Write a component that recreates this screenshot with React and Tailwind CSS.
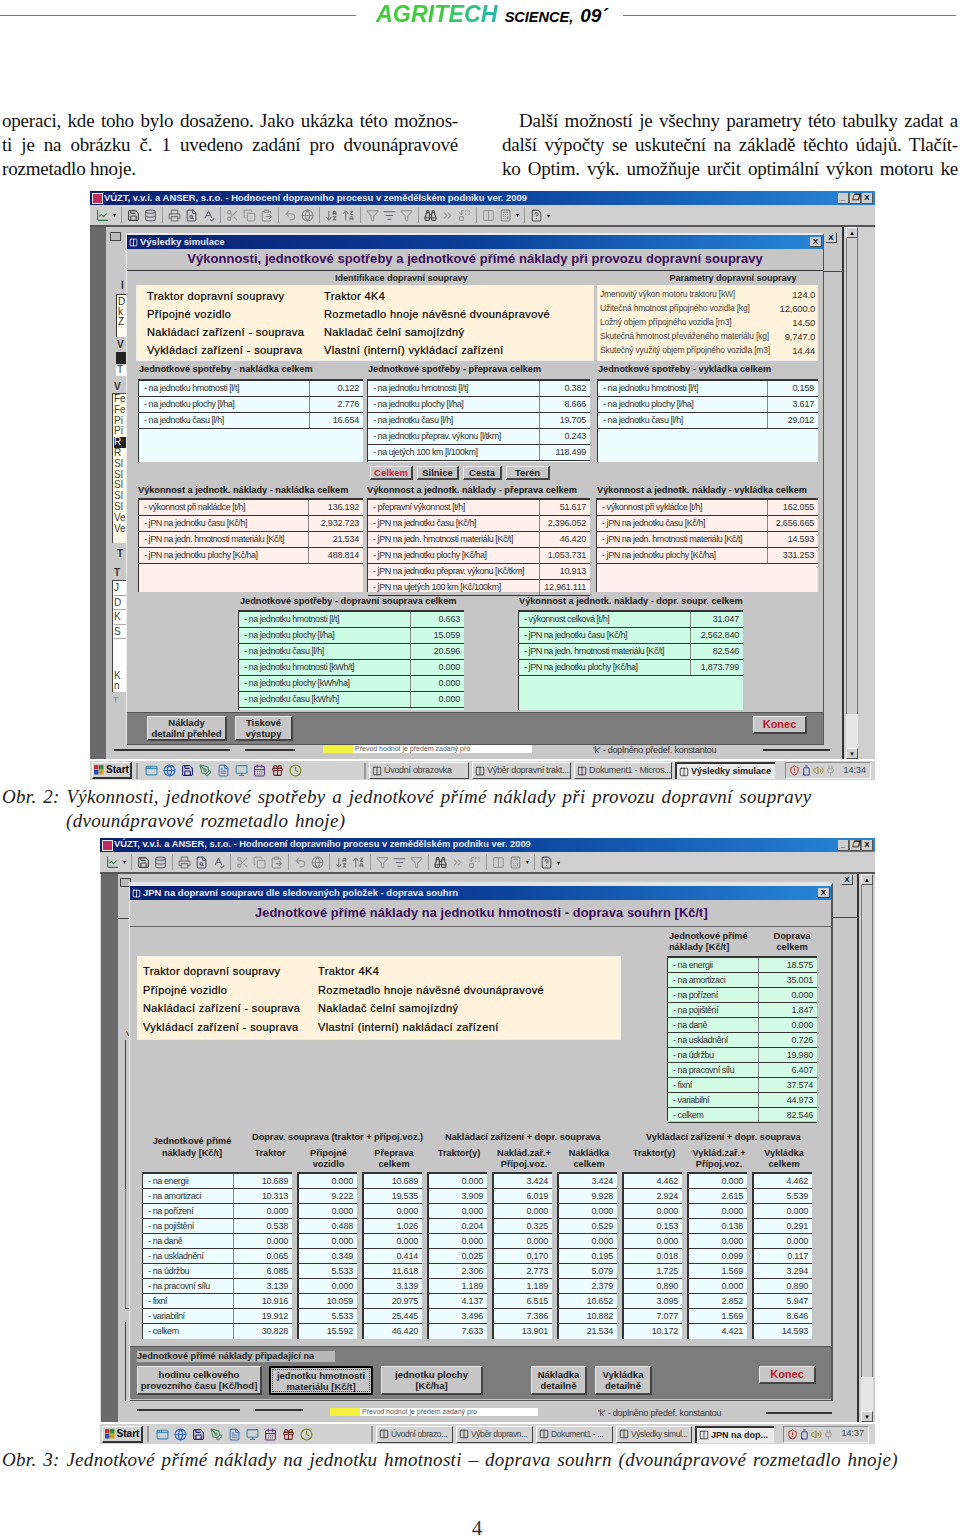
import React from "react";
import {
  Save, Database, Printer, FileSearch, SpellCheck, Scissors, Copy, ClipboardPaste, Undo2, Globe,
  ArrowDownAZ, ArrowUpZA, Filter, ListFilter, Funnel, Binoculars, ChevronsRight, Replace, Columns2,
  Calculator, FileQuestion, LineChart, Monitor, CalendarDays, Gift, Clock, PenTool, FileText,
  ShieldAlert, Battery, Volume2, Plug, AppWindow,
} from "lucide-react";

const dark = "border-[#333]";

function TitleBar({ text, size }) {
  return (
    <div className="h-[14px] flex items-center bg-gradient-to-r from-[#0a1f70] via-[#0b3f98] to-[#2a86d8] pl-[2px]">
      <div className="w-[11px] h-[11px] bg-[#c02a5c] border border-[#eee] mr-[1px] shrink-0" />
      <span className={`${size} font-bold text-[#e8eef8] whitespace-nowrap leading-none`}>{text}</span>
      <div className="ml-auto flex gap-[1px] pr-[2px]">
        <WinBtn>_</WinBtn>
        <WinBtn>
          <span className="italic">❐</span>
        </WinBtn>
        <WinBtn>X</WinBtn>
      </div>
    </div>
  );
}

function WinBtn({ children }) {
  return (
    <div className="w-[11px] h-[11px] bg-[#cfcfcf] border-r border-b border-[#555] flex items-center justify-center text-[8px] font-bold text-black leading-none">
      {children}
    </div>
  );
}

function Sep() {
  return <div className="w-[1px] h-[16px] bg-[#9a9a9a] mx-[1px] shrink-0" />;
}

function Toolbar() {
  const i = "w-[13px] h-[13px] shrink-0";
  return (
    <div className="h-[22px] bg-[#cfcfcf] border-b-2 border-[#555] flex items-center pl-[6px] gap-[4px]">
      <LineChart className={`${i} text-[#2a7a4a]`} />
      <span className="text-[6px]">▾</span>
      <Sep />
      <Save className={`${i} text-[#444]`} />
      <Database className={`${i} text-[#667]`} />
      <Sep />
      <Printer className={`${i} text-[#777]`} />
      <FileSearch className={`${i} text-[#556]`} />
      <SpellCheck className={`${i} text-[#667]`} />
      <Sep />
      <Scissors className={`${i} text-[#999]`} />
      <Copy className={`${i} text-[#999]`} />
      <ClipboardPaste className={`${i} text-[#888]`} />
      <Sep />
      <Undo2 className={`${i} text-[#999]`} />
      <Globe className={`${i} text-[#888]`} />
      <Sep />
      <ArrowDownAZ className={`${i} text-[#777]`} />
      <ArrowUpZA className={`${i} text-[#777]`} />
      <Sep />
      <Filter className={`${i} text-[#999]`} />
      <ListFilter className={`${i} text-[#667]`} />
      <Funnel className={`${i} text-[#999]`} />
      <Sep />
      <Binoculars className={`${i} text-[#444]`} />
      <ChevronsRight className={`${i} text-[#999]`} />
      <Replace className={`${i} text-[#999]`} />
      <Sep />
      <Columns2 className={`${i} text-[#999]`} />
      <Calculator className={`${i} text-[#888]`} />
      <span className="text-[6px]">▾</span>
      <Sep />
      <FileQuestion className={`${i} text-[#555]`} />
      <span className="text-[6px] self-end mb-[4px]">▾</span>
    </div>
  );
}

function Taskbar({ h, start, tasks, time, taskText, toTasksGap, trayGap }) {
  const i = "w-[13px] h-[13px] shrink-0";
  return (
    <div className={`${h} bg-[#d2d2d2] border-t-2 border-white flex items-center pl-[2px]`}>
      <div className={`${start} h-[17px] bg-[#d2d2d2] border-t border-l border-white border-r-2 border-b-2 border-r-[#333] border-b-[#333] flex items-center justify-center gap-[2px] shrink-0`}>
        <svg width="10" height="10" viewBox="0 0 10 10">
          <rect x="0" y="0" width="4.5" height="4.5" fill="#c83232" />
          <rect x="5" y="0" width="4.5" height="4.5" fill="#2e8b3a" />
          <rect x="0" y="5" width="4.5" height="4.5" fill="#2850b0" />
          <rect x="5" y="5" width="4.5" height="4.5" fill="#c8a020" />
        </svg>
        <span className="text-[10px] font-bold leading-none">Start</span>
      </div>
      <div className="ml-[4px] w-[2px] h-[16px] border-l border-r border-[#999] shrink-0" />
      <div className="gap-[5px] flex items-center ml-[7px]">
        <AppWindow className={`${i} text-[#3a8ab8]`} />
        <Globe className={`${i} text-[#2a6ad0]`} />
        <Save className={`${i} text-[#1a1a80]`} />
        <PenTool className={`${i} text-[#4a8a6a]`} />
        <FileText className={`${i} text-[#4a7ab8]`} />
        <Monitor className={`${i} text-[#3a8ab8]`} />
        <CalendarDays className={`${i} text-[#602a80]`} />
        <Gift className={`${i} text-[#702020]`} />
        <Clock className={`${i} text-[#7a8a10]`} />
      </div>
      <div className={`${toTasksGap} w-[2px] h-[16px] border-l border-r border-[#999] shrink-0`} />
      <div className="flex ml-[3px] gap-[3px]">
        {tasks.map((t) => (
          <div
            key={t.name}
            className={`${t.w} h-[17px] flex items-center gap-[2px] pl-[2px] whitespace-nowrap overflow-hidden leading-none ${
              t.active
                ? "bg-[#ebebeb] border-t-2 border-l-2 border-[#333] font-bold text-[#222] text-[9px]"
                : `bg-[#d2d2d2] border-t border-l border-white border-r border-b border-r-[#444] border-b-[#444] text-[#444] ${taskText}`
            }`}
          >
            <Columns2 className="w-[10px] h-[10px] text-[#333] shrink-0" />
            {t.name}
          </div>
        ))}
      </div>
      <div className={`${trayGap} w-[86px] h-[17px] border-t border-l border-[#888] border-r border-b border-r-white border-b-white flex items-center gap-[1px] pl-[3px] shrink-0`}>
        <ShieldAlert className="w-[11px] h-[11px] text-[#b02020]" />
        <Battery className="w-[11px] h-[11px] text-[#1a3aa0] rotate-[-90deg]" />
        <Volume2 className="w-[11px] h-[11px] text-[#908020]" />
        <Plug className="w-[11px] h-[11px] text-[#999]" />
        <span className="ml-auto mr-[4px] text-[9px] text-[#444]">{time}</span>
      </div>
    </div>
  );
}

function Scrollbar() {
  return (
    <div className="w-[12px] h-full flex flex-col bg-[#d8d8d8] mr-[2px] ml-[2px]">
      <div className="h-[11px] bg-[#cfcfcf] border-t border-l border-white border-r border-b border-r-[#555] border-b-[#555] flex items-center justify-center text-[6px] leading-none">▲</div>
      <div className="flex-1 bg-[#cdcdcd] border-x border-[#777]" />
      <div className="h-[34px] bg-[#e6e6e6]" />
      <div className="h-[11px] bg-[#cfcfcf] border-t border-l border-white border-r border-b border-r-[#555] border-b-[#555] flex items-center justify-center text-[6px] leading-none">▼</div>
    </div>
  );
}

function DataTable({ rows, w, lw, bg, rowH = "h-[16px]", h }) {
  return (
    <div className={`${w} ${h} ${bg} border-t-2 border-l ${dark} flex flex-col shrink-0`}>
      {rows.map(([label, value]) => (
        <div key={label} className={`${rowH} flex border-b ${dark} shrink-0`}>
          <div className={`${lw} pl-[5px] text-[9px] tracking-[-0.45px] text-[#333] leading-none flex items-center whitespace-nowrap overflow-hidden border-r border-[#888]`}>
            {label}
          </div>
          <div className="flex-1 pr-[4px] text-[9px] tracking-[-0.2px] text-[#333] leading-none flex items-center justify-end">{value}</div>
        </div>
      ))}
    </div>
  );
}

function Sub({ children, w, className = "" }) {
  return (
    <div className={`${w} text-[9.2px] font-bold text-[#181818] leading-none whitespace-nowrap shrink-0 flex items-center ${className}`}>
      {children}
    </div>
  );
}

function DlgTitle({ text }) {
  return (
    <div className="h-[14px] bg-gradient-to-r from-[#0a1f70] via-[#0b3f98] to-[#2a86d8] flex items-center pl-[2px] gap-[2px] shrink-0">
      <Columns2 className="w-[9px] h-[9px] text-white shrink-0" />
      <span className="text-[9.5px] font-bold text-[#e8eef8] leading-none">{text}</span>
      <div className="ml-auto pr-[1px] flex">
        <div className="w-[12px] h-[10px] bg-[#cfcfcf] border-r border-b border-[#444] flex items-center justify-center text-[8px] font-bold leading-none">X</div>
      </div>
    </div>
  );
}

function Btn({ w, h, children, className = "" }) {
  return (
    <div className={`${w} ${h} bg-[#c6c6c6] border-t border-l border-[#e8e8e8] border-r-2 border-b-2 border-r-[#444] border-b-[#444] flex items-center justify-center text-center text-[9.5px] font-bold leading-[11px] text-[#222] shrink-0 ${className}`}>
      <div>{children}</div>
    </div>
  );
}

function HintStrip({ w, ml }) {
  return (
    <div className={`${ml} ${w} h-[8px] bg-white flex text-[7px] text-[#555] leading-[8px] shrink-0`}>
      <span className="bg-[#f4f040] w-[30px] h-[8px] shrink-0" />
      <span className="whitespace-nowrap pl-[2px]">Převod hodnot je předem zadaný pro</span>
    </div>
  );
}

const info1 = [
  ["Traktor dopravní soupravy", "Traktor 4K4"],
  ["Přípojné vozidlo", "Rozmetadlo hnoje návěsné dvounápravové"],
  ["Nakládací zařízení - souprava", "Nakladač čelní samojízdný"],
  ["Vykládací zařízení - souprava", "Vlastní (interní) vykládací zařízení"],
];
const info2 = [info1[0], info1[1], info1[2], ["Vykládací zařízení - souprava", "Vlastní (interní) nakládací zařízení"]];

const params = [
  ["Jmenovitý výkon motoru traktoru [kW]", "124.0"],
  ["Užitečná hmotnost přípojného vozidla [kg]", "12,600.0"],
  ["Ložný objem přípojného vozidla [m3]", "14.50"],
  ["Skutečná hmotnost převáženého materiálu [kg]", "9,747.0"],
  ["Skutečný využitý objem přípojného vozidla [m3]", "14.44"],
];

const cons1 = [["- na jednotku hmotnosti [l/t]", "0.122"], ["- na jednotku plochy [l/ha]", "2.776"], ["- na jednotku času [l/h]", "16.654"]];
const cons2 = [
  ["- na jednotku hmotnosti [l/t]", "0.382"],
  ["- na jednotku plochy [l/ha]", "8.666"],
  ["- na jednotku času [l/h]", "19.705"],
  ["- na jednotku přeprav. výkonu [l/tkm]", "0.243"],
  ["- na ujetých 100 km [l/100km]", "118.499"],
];
const cons3 = [["- na jednotku hmotnosti [l/t]", "0.159"], ["- na jednotku plochy [l/ha]", "3.617"], ["- na jednotku času [l/h]", "29.012"]];
const perf1 = [
  ["- výkonnost při nakládce [t/h]", "136.192"],
  ["- jPN na jednotku času [Kč/h]", "2,932.723"],
  ["- jPN na jedn. hmotnosti materiálu [Kč/t]", "21.534"],
  ["- jPN na jednotku plochy [Kč/ha]", "488.814"],
];
const perf2 = [
  ["- přepravní výkonnost [t/h]", "51.617"],
  ["- jPN na jednotku času [Kč/h]", "2,396.052"],
  ["- jPN na jedn. hmotnosti materiálu [Kč/t]", "46.420"],
  ["- jPN na jednotku plochy [Kč/ha]", "1,053.731"],
  ["- jPN na jednotku přeprav. výkonu [Kč/tkm]", "10.913"],
  ["- jPN na ujetých 100 km [Kč/100km]", "12,961.111"],
];
const perf3 = [
  ["- výkonnost při vykládce [t/h]", "162.055"],
  ["- jPN na jednotku času [Kč/h]", "2,656.665"],
  ["- jPN na jedn. hmotnosti materiálu [Kč/t]", "14.593"],
  ["- jPN na jednotku plochy [Kč/ha]", "331.253"],
];
const green1 = [
  ["- na jednotku hmotnosti [l/t]", "0.663"],
  ["- na jednotku plochy [l/ha]", "15.059"],
  ["- na jednotku času [l/h]", "20.596"],
  ["- na jednotku hmotnosti [kWh/t]", "0.000"],
  ["- na jednotku plochy [kWh/ha]", "0.000"],
  ["- na jednotku času [kWh/h]", "0.000"],
];
const green2 = [
  ["- výkonnost celková  [t/h]", "31.047"],
  ["- jPN na jednotku času [Kč/h]", "2,562.840"],
  ["- jPN na jedn. hmotnosti materiálu [Kč/t]", "82.546"],
  ["- jPN na jednotku plochy [Kč/ha]", "1,873.799"],
];

const costLabels = ["- na energii", "- na amortizaci", "- na pořízení", "- na pojištění", "- na daně", "- na uskladnění", "- na údržbu", "- na pracovní sílu", "- fixní", "- variabilní", "- celkem"];
const costSummary = ["18.575", "35.001", "0.000", "1.847", "0.000", "0.726", "19.980", "6.407", "37.574", "44.973", "82.546"];
const costCols = [
  { head: ["Připojné", "vozidlo"], v: ["0.000", "9.222", "0.000", "0.488", "0.000", "0.349", "5.533", "0.000", "10.059", "5.533", "15.592"] },
  { head: ["Přeprava", "celkem"], v: ["10.689", "19.535", "0.000", "1.026", "0.000", "0.414", "11.618", "3.139", "20.975", "25.445", "46.420"] },
  { head: ["Traktor(y)"], v: ["0.000", "3.909", "0.000", "0.204", "0.000", "0.025", "2.306", "1.189", "4.137", "3.496", "7.633"] },
  { head: ["Naklád.zař.+", "Přípoj.voz."], v: ["3.424", "6.019", "0.000", "0.325", "0.000", "0.170", "2.773", "1.189", "6.515", "7.386", "13.901"] },
  { head: ["Nakládka", "celkem"], v: ["3.424", "9.928", "0.000", "0.529", "0.000", "0.195", "5.079", "2.379", "10.652", "10.882", "21.534"] },
  { head: ["Traktor(y)"], v: ["4.462", "2.924", "0.000", "0.153", "0.000", "0.018", "1.725", "0.890", "3.095", "7.077", "10.172"] },
  { head: ["Vyklád.zař.+", "Přípoj.voz."], v: ["0.000", "2.615", "0.000", "0.138", "0.000", "0.099", "1.569", "0.000", "2.852", "1.569", "4.421"] },
  { head: ["Vykládka", "celkem"], v: ["4.462", "5.539", "0.000", "0.291", "0.000", "0.117", "3.294", "0.890", "5.947", "8.646", "14.593"] },
];
const costTraktor = ["10.689", "10.313", "0.000", "0.538", "0.000", "0.065", "6.085", "3.139", "10.916", "19.912", "30.828"];

// stray bits of the form behind the dialog, first screenshot
function BackStrip1() {
  const c = "text-[10px] leading-none text-[#333] pl-[1px]";
  return (
    <div className="w-[21px] h-full bg-[#c8c8c8] flex flex-col overflow-hidden shrink-0 pl-[2px]">
      <div className="h-[5px] mt-[5px]">
        <div className="w-[11px] h-[9px] bg-[#bbb] border border-[#444] ml-[2px]" />
      </div>
      <div className={`${c} mt-[44px] ml-[12px] font-bold`}>I</div>
      <div className="mt-[3px] ml-[8px] h-[43px] bg-[#fdfdf0] border-l border-t border-[#333] flex flex-col pt-[2px]">
        <span className={c}>D</span>
        <span className={c}>k</span>
        <span className={c}>Z</span>
      </div>
      <div className={`${c} mt-[3px] ml-[8px] font-bold`}>V</div>
      <div className="mt-[2px] ml-[8px] h-[12px] bg-[#222]" />
      <div className={`${c} ml-[8px] mt-[1px] bg-white h-[11px]`}>T</div>
      <div className={`${c} mt-[6px] ml-[5px] font-bold`}>V</div>
      <div className="mt-[1px] ml-[4px] h-[150px] bg-[#fdfbe8] border-l border-t border-[#444] flex flex-col text-[10px] leading-[10.8px] text-[#444] pl-[1px]">
        {["Fe", "Fe", "Pi", "Pi"].map((t, k) => <span key={k}>{t}</span>)}
        <span className="bg-[#222] text-white">R</span>
        {["R", "Sl", "Sl", "Sl", "Sl", "Sl", "Ve", "Ve"].map((t, k) => <span key={k}>{t}</span>)}
      </div>
      <div className={`${c} mt-[6px] ml-[8px] font-bold`}>T</div>
      <div className={`${c} mt-[9px] ml-[5px] font-bold`}>T</div>
      <div className="mt-[2px] ml-[4px] h-[112px] bg-white border-l border-t border-[#444] flex flex-col text-[10px] text-[#444] pl-[1px]">
        {["J", "D", "K", "S"].map((t) => (
          <span key={t} className="h-[14.5px] border-b border-[#aaa] leading-[14px]">{t}</span>
        ))}
        <span className="mt-[32px] leading-[10px]">K</span>
        <span className="leading-[10px]">n</span>
      </div>
      <div className="text-[9px] text-[#888] ml-[5px] mt-[4px] leading-none">T</div>
    </div>
  );
}

function Win1() {
  return (
    <div className="ml-[90px] w-[785px] h-[589px] flex flex-col bg-[#cfcfcf]">
      <TitleBar size="text-[9.45px]" text="VÚZT, v.v.i. a ANSER, s.r.o. - Hodnocení dopravního procesu v zemědělském podniku ver. 2009" />
      <Toolbar />
      <div className="h-[532px] flex">
        <div className="w-[16px] bg-[#6a6a6a] shrink-0" />
        <div className="w-[736px] flex flex-col shrink-0 bg-[#c8c8c8]">
          <div className="h-[518px] flex">
            <BackStrip1 />
            <div className="w-[697px] h-[512px] mt-[6px] bg-[#c6c6c6] border-t-2 border-[#eaeaea] flex flex-col shrink-0 border-r border-r-[#555] border-b border-b-[#555] shadow-[-1px_0_0_#eee]">
              <DlgTitle text="Výsledky simulace" />
              <div className="h-[21px] pb-[3px] flex items-center justify-center text-[13px] font-bold text-[#3a0a5a] tracking-[0.03px] leading-none whitespace-nowrap shrink-0">
                Výkonnosti, jednotkové spotřeby a jednotkové přímé náklady při provozu dopravní soupravy
              </div>
              <div className="h-[1px] bg-[#333] shrink-0" />
              <div className="h-[14px] flex text-[9px] font-bold text-[#222] leading-none items-center shrink-0 whitespace-nowrap">
                <span className="ml-[208px]">Identifikace dopravní soupravy</span>
                <span className="ml-[202px]">Parametry dopravní soupravy</span>
              </div>
              <div className="h-[76px] flex pl-[9px] gap-[3px] shrink-0">
                <div className="w-[458px] bg-[#fff3dc] border border-[#eee] grid grid-cols-[177px_1fr] content-start pt-[5px] gap-y-[7px] pl-[10px] text-[11px] tracking-[0.38px] [-webkit-text-stroke:0.2px_#000] text-black leading-none">
                  {info1.flat().map((t) => (
                    <span key={t} className="whitespace-nowrap">{t}</span>
                  ))}
                </div>
                <div className="w-[221px] bg-[#fff3dc] border border-[#eee] flex flex-col justify-evenly px-[2px] text-[8.5px] tracking-[-0.2px] text-[#444] leading-none">
                  {params.map(([a, b]) => (
                    <div key={a} className="flex justify-between">
                      <span>{a}</span>
                      <span className="text-[9.5px] tracking-[-0.2px] text-[#333]">{b}</span>
                    </div>
                  ))}
                </div>
              </div>
              <div className="h-[18px] flex pl-[12px] shrink-0">
                <Sub w="w-[229px]">Jednotkové spotřeby - nakládka celkem</Sub>
                <Sub w="w-[230px]">Jednotkové spotřeby - přeprava celkem</Sub>
                <Sub w="w-[200px]">Jednotkové spotřeby - vykládka celkem</Sub>
              </div>
              <div className="flex pl-[11px] shrink-0">
                <DataTable rows={cons1} w="w-[225px]" lw="w-[171px]" h="h-[83px]" bg="bg-[#eefdfd]" />
                <DataTable rows={cons2} w="w-[223px] ml-[4px]" lw="w-[172px]" h="h-[83px]" bg="bg-[#eefdfd]" />
                <DataTable rows={cons3} w="w-[221px] ml-[7px]" lw="w-[170px]" h="h-[83px]" bg="bg-[#eefdfd]" />
              </div>
              <div className="h-[14px] mt-[4px] flex pl-[243px] gap-[4px] shrink-0">
                <Btn w="w-[43px]" h="h-[14px]" className="!text-[#d02030]">Celkem</Btn>
                <Btn w="w-[42px]" h="h-[14px]">Silnice</Btn>
                <Btn w="w-[39px]" h="h-[14px]">Cesta</Btn>
                <Btn w="w-[44px]" h="h-[14px]">Terén</Btn>
              </div>
              <div className="h-[15px] mt-[3px] flex pl-[11px] shrink-0">
                <Sub w="w-[229px]">Výkonnost a jednotk. náklady - nakládka celkem</Sub>
                <Sub w="w-[230px]">Výkonnost a jednotk. náklady - přeprava celkem</Sub>
                <Sub w="w-[200px]">Výkonnost a jednotk. náklady - vykládka celkem</Sub>
              </div>
              <div className="flex pl-[11px] shrink-0">
                <DataTable rows={perf1} w="w-[225px]" lw="w-[170px]" h="h-[94px]" bg="bg-[#fff0ec]" />
                <DataTable rows={perf2} w="w-[223px] ml-[4px]" lw="w-[172px]" h="h-[94px]" bg="bg-[#fff0ec]" />
                <DataTable rows={perf3} w="w-[222px] ml-[6px]" lw="w-[171px]" h="h-[94px]" bg="bg-[#fff0ec]" />
              </div>
              <div className="h-[16px] mt-[2px] flex pl-[113px] shrink-0">
                <Sub w="w-[279px]">Jednotkové spotřeby - dopravní souprava celkem</Sub>
                <Sub w="w-[230px]">Výkonnost a jednotk. náklady - dopr. soupr. celkem</Sub>
              </div>
              <div className="flex pl-[111px] shrink-0">
                <DataTable rows={green1} w="w-[226px]" lw="w-[172px]" h="h-[100px]" bg="bg-[#ccfbe6]" />
                <DataTable rows={green2} w="w-[225px] ml-[54px]" lw="w-[172px]" h="h-[100px]" bg="bg-[#ccfbe6]" />
              </div>
              <div className="h-[32px] mt-[2px] bg-[#7c7c7c] border-t border-[#555] flex items-start pt-[3px] pl-[20px] shrink-0">
                <Btn w="w-[80px]" h="h-[25px]">
                  Náklady<br />detailní přehled
                </Btn>
                <Btn w="w-[58px]" h="h-[25px]" className="ml-[8px]">
                  Tiskové<br />výstupy
                </Btn>
                <Btn w="w-[54px]" h="h-[18px]" className="ml-[460px] !text-[#c01828] !text-[11px]">Konec</Btn>
              </div>
            </div>
            <div className="flex-1 flex flex-col items-end">
              <div className="w-[11px] h-[10px] mt-[6px] mr-[5px] bg-[#cfcfcf] border-r border-b border-[#444] flex items-center justify-center text-[8px] font-bold leading-none">X</div>
              <div className="w-full h-[1px] bg-[#444] mt-[28px]" />
            </div>
          </div>
          <div className="flex-1 flex items-start">
            <div className="ml-[8px] mt-[4px] w-[116px] h-[2px] bg-[#333] shrink-0" />
            <div className="ml-[15px] mt-[4px] w-[50px] h-[2px] bg-[#333] shrink-0" />
            <HintStrip ml="ml-[28px]" w="w-[209px]" />
            <span className="ml-[61px] mt-[1px] text-[9px] tracking-[-0.2px] text-[#333] leading-none whitespace-nowrap">'k' - doplněno předef. konstantou</span>
            <div className="ml-[47px] mt-[4px] w-[67px] h-[2px] bg-[#333] shrink-0" />
          </div>
        </div>
        <div className="w-[2px] bg-[#333] shrink-0" />
        <div className="flex-1 h-full flex bg-[#cfcfcf]">
          <Scrollbar />
        </div>
      </div>
      <Taskbar
        h="h-[21px]"
        start="w-[40px]"
        toTasksGap="ml-[62px]"
        trayGap="ml-[10px]"
        taskText="text-[9px] tracking-[-0.3px]"
        time="14:34"
        tasks={[
          { name: "Úvodní obrazovka", w: "w-[100px]" },
          { name: "Výběr dopravní trakt...", w: "w-[99px]" },
          { name: "Dokument1 - Micros...", w: "w-[98px]" },
          { name: "Výsledky simulace", w: "w-[100px]", active: true },
        ]}
      />
    </div>
  );
}

function CostCol({ v, w = "w-[60px]", ml = "ml-[5px]" }) {
  return (
    <div className={`${w} ${ml} border-t-2 border-l-2 ${dark} bg-[#eefdfd] shrink-0`}>
      {v.map((x, k) => (
        <div key={k} className={`h-[15px] pr-[4px] flex items-center justify-end text-[9px] tracking-[-0.2px] text-[#333] leading-none ${k < 10 ? "border-b " + dark : ""}`}>{x}</div>
      ))}
    </div>
  );
}

function Head({ lines, w, ml = "ml-[5px]" }) {
  return (
    <div className={`${w} ${ml} flex flex-col items-center text-[9.2px] font-bold text-[#222] leading-[10.5px] whitespace-nowrap shrink-0`}>
      {lines.map((l) => <span key={l}>{l}</span>)}
    </div>
  );
}

function Win2() {
  return (
    <div className="ml-[100px] w-[775px] h-[606px] flex flex-col bg-[#cfcfcf]">
      <TitleBar size="text-[9.3px]" text="VÚZT, v.v.i. a ANSER, s.r.o. - Hodnocení dopravního procesu v zemědělském podniku ver. 2009" />
      <Toolbar />
      <div className="h-[548px] flex">
        <div className="w-[18px] bg-[#6a6a6a] border-l border-[#ddd] shrink-0" />
        <div className="w-[739px] flex flex-col shrink-0 bg-[#c8c8c8]">
          <div className="h-[527px] flex">
            <div className="w-[12px] shrink-0 flex flex-col">
              <div className="w-[11px] h-[9px] mt-[4px] bg-[#bbb] border border-[#444] ml-[2px]" />
              <div className="h-[1px] bg-[#444] mt-[31px]" />
              <div className="mt-[111px] ml-[8px] text-[8px] leading-none">V</div>
              <div className="mt-[2px] ml-[7px] w-[1px] h-[150px] bg-[#444]" />
              <div className="mt-[1px] ml-[7px] w-[1px] h-[119px] bg-[#777]" />
              <div className="ml-[7px] w-[5px] h-[1px] bg-[#444]" />
              <div className="mt-[13px] ml-[7px] w-[1px] h-[80px] border-l border-[#444]" />
            </div>
            <div className="w-[703px] h-[519px] mt-[8px] bg-[#c6c6c6] border-t-4 border-[#e4e4e4] flex flex-col shrink-0 border-r-2 border-r-[#555] border-b border-b-[#555] shadow-[-1px_0_0_#eee]">
              <DlgTitle text="JPN na dopravní soupravu dle sledovaných položek - doprava souhrn" />
              <div className="h-[26px] flex items-center pl-[125px] text-[12.8px] font-bold text-[#3a0a5a] tracking-[0.1px] leading-none whitespace-nowrap shrink-0">
                Jednotkové přímé náklady na jednotku hmotnosti - doprava souhrn [Kč/t]
              </div>
              <div className="h-[1px] bg-[#666] shrink-0" />
              <div className="h-[194px] flex shrink-0">
                <div className="w-[484px] h-[84px] ml-[7px] mt-[29px] bg-[#fff3dc] border border-[#eee] grid grid-cols-[175px_1fr] content-start pt-[9px] gap-y-[7.7px] pl-[5px] text-[11px] tracking-[0.38px] [-webkit-text-stroke:0.2px_#000] text-black leading-none shrink-0">
                  {info2.flat().map((t) => (
                    <span key={t} className="whitespace-nowrap">{t}</span>
                  ))}
                </div>
                <div className="ml-[46px] w-[150px] flex flex-col shrink-0">
                  <div className="h-[29px] flex text-[9.2px] font-bold text-[#222] leading-[10.5px] pt-[4px]">
                    <div className="w-[100px] pl-[2px] whitespace-nowrap">Jednotkové přímé<br />náklady [Kč/t]</div>
                    <div className="flex-1 text-center">Doprava<br />celkem</div>
                  </div>
                  <DataTable
                    rows={costLabels.map((l, k) => [l, costSummary[k]])}
                    w="w-[150px]"
                    lw="w-[91px]"
                    h="h-[165px]"
                    rowH="h-[15px]"
                    bg="bg-[#d4fbe6]"
                  />
                </div>
              </div>
              <div className="h-[14px] mt-[12px] flex text-[9.2px] font-bold text-[#222] leading-none whitespace-nowrap shrink-0 pl-[12px]">
                <div className="w-[100px] text-center pt-[4px]">Jednotkové přímé</div>
                <div className="w-[186px] pl-[10px]">Doprav. souprava (traktor + přípoj.voz.)</div>
                <div className="w-[192px] pl-[17px]">Nakládací zařízení + dopr. souprava</div>
                <div className="w-[200px] pl-[26px]">Vykládací zařízení + dopr. souprava</div>
              </div>
              <div className="h-[25px] flex pl-[12px] shrink-0 pt-[1px]">
                <Head lines={["náklady [Kč/t]"]} w="w-[100px]" ml="ml-0" />
                <Head lines={["Traktor"]} w="w-[56px]" ml="ml-0" />
                <Head lines={costCols[0].head} w="w-[61px]" ml="ml-[0px]" />
                {costCols.slice(1).map((c, k) => (
                  <Head key={k} lines={c.head} w="w-[60px]" />
                ))}
              </div>
              <div className="flex pl-[12px] shrink-0">
                <div className={`w-[150px] border-t-2 border-l ${dark} bg-[#eefdfd] shrink-0`}>
                  {costLabels.map((l, k) => (
                    <div key={l} className={`h-[15px] flex ${k < 10 ? "border-b " + dark : ""}`}>
                      <div className="w-[91px] pl-[5px] text-[9px] tracking-[-0.4px] text-[#333] leading-none flex items-center border-r border-[#888]">{l}</div>
                      <div className="flex-1 pr-[4px] text-[9px] tracking-[-0.2px] text-[#333] leading-none flex items-center justify-end">{costTraktor[k]}</div>
                    </div>
                  ))}
                </div>
                {costCols.map((c, k) => (
                  <CostCol key={k} v={c.v} />
                ))}
              </div>
              <div className="h-[53px] mt-[7px] bg-[#7c7c7c] border-t border-[#555] flex flex-col shrink-0">
                <div className="ml-[7px] mt-[4px] w-[198px] h-[11px] bg-[#b8b8b8] text-[9.2px] font-bold text-[#222] leading-none flex items-center whitespace-nowrap">
                  Jednotkové přímé náklady připadající na
                </div>
                <div className="flex mt-[4px] pl-[7px] items-start">
                  <Btn w="w-[125px]" h="h-[29px]">hodinu celkového<br />provozního času [Kč/hod]</Btn>
                  <Btn w="w-[104px]" h="h-[29px]" className="ml-[7px] !border-2 !border-black outline-1 outline-dotted -outline-offset-4 outline-[#444]">jednotku hmotnosti<br />materiálu [Kč/t]</Btn>
                  <Btn w="w-[102px]" h="h-[29px]" className="ml-[8px]">jednotku plochy<br />[Kč/ha]</Btn>
                  <Btn w="w-[56px]" h="h-[29px]" className="ml-[48px]">Nákladka<br />detailně</Btn>
                  <Btn w="w-[57px]" h="h-[29px]" className="ml-[8px]">Vykládka<br />detailně</Btn>
                  <Btn w="w-[57px]" h="h-[18px]" className="ml-[107px] !text-[#c01828] !text-[11px]">Konec</Btn>
                </div>
              </div>
            </div>
            <div className="flex-1 flex flex-col items-end">
              <div className="w-[11px] h-[10px] mt-[1px] mr-[4px] bg-[#cfcfcf] border-r border-b border-[#444] flex items-center justify-center text-[8px] font-bold leading-none">X</div>
              <div className="w-full h-[1px] bg-[#444] mt-[32px]" />
            </div>
          </div>
          <div className="flex-1 flex items-start">
            <div className="ml-[19px] mt-[8px] w-[103px] h-[2px] bg-[#333] shrink-0" />
            <div className="ml-[15px] mt-[8px] w-[48px] h-[2px] bg-[#333] shrink-0" />
            <div className="mt-[7px] flex items-start">
              <HintStrip ml="ml-[27px]" w="w-[208px]" />
              <span className="ml-[60px] mt-[1px] text-[9px] tracking-[-0.2px] text-[#333] leading-none whitespace-nowrap">'k' - doplněno předef. konstantou</span>
            </div>
            <div className="ml-[45px] mt-[11px] w-[66px] h-[2px] bg-[#333] shrink-0" />
          </div>
        </div>
        <div className="w-[2px] bg-[#333] shrink-0" />
        <div className="flex-1 h-full flex bg-[#cfcfcf]">
          <Scrollbar />
        </div>
      </div>
      <Taskbar
        h="h-[22px]"
        start="w-[41px]"
        toTasksGap="ml-[58px]"
        trayGap="ml-[9px]"
        taskText="text-[8.5px] tracking-[-0.4px]"
        time="14:37"
        tasks={[
          { name: "Úvodní obrazo...", w: "w-[77px]" },
          { name: "Výběr dopravn...", w: "w-[77px]" },
          { name: "Dokument1 - ...", w: "w-[77px]" },
          { name: "Výsledky simul...", w: "w-[76px]" },
          { name: "JPN na dop...", w: "w-[79px]", active: true },
        ]}
      />
    </div>
  );
}

function Line({ children, last, indent }) {
  return (
    <div className={`h-[24px] ${last ? "whitespace-nowrap" : "text-justify [text-align-last:justify]"} ${indent ? "pl-[17px]" : ""}`}>
      {children}
    </div>
  );
}

export default function App() {
  const caption = "font-['Liberation_Serif',serif] italic text-[19px] leading-[24px] tracking-[0.3px] [word-spacing:1.7px] text-[#222] whitespace-nowrap";
  return (
    <div className="w-[960px] h-[1540px] bg-white overflow-hidden font-['Liberation_Sans',sans-serif] text-black">
      {/* running head */}
      <div className="h-[26px] flex items-center pt-[4px]">
        <div className="w-[356px] h-[1px] bg-[#777] shrink-0" />
        <div className="ml-[20px] flex items-baseline italic font-bold leading-none whitespace-nowrap">
          <span className="text-[23.3px] bg-gradient-to-r from-[#3fcc3a] via-[#3fcc3a] to-[#27b8a8] bg-clip-text text-transparent pr-[1px]">AGRITECH</span>
          <span className="text-[14.5px] ml-[6px]">SCIENCE,</span>
          <span className="text-[19px] ml-[7px]">09´</span>
        </div>
        <div className="ml-[15px] w-[333px] h-[1px] bg-[#777] shrink-0" />
      </div>

      {/* body text columns */}
      <div className="mt-[83px] flex pl-[2px] font-['Liberation_Serif',serif] text-[19px] leading-[24px] tracking-[-0.2px] text-[#111]">
        <div className="w-[456px] shrink-0">
          <Line>operaci, kde toho bylo dosaženo. Jako ukázka této možnos-</Line>
          <Line>ti je na obrázku č. 1 uvedeno zadání pro dvounápravové</Line>
          <Line last>rozmetadlo hnoje.</Line>
        </div>
        <div className="w-[456px] ml-[44px] shrink-0">
          <Line indent>Další možností je všechny parametry této tabulky zadat a</Line>
          <Line>další výpočty se uskuteční na základě těchto údajů. Tlačít-</Line>
          <Line>ko Optim. výk. umožňuje určit optimální výkon motoru ke</Line>
        </div>
      </div>

      <div className="mt-[10px]">
        <Win1 />
      </div>

      <div className={`mt-[5px] pl-[2px] ${caption}`}>
        <div>Obr. 2: Výkonnosti, jednotkové spotřeby a jednotkové přímé náklady při provozu dopravní soupravy</div>
        <div className="pl-[64px]">(dvounápravové rozmetadlo hnoje)</div>
      </div>

      <div className="mt-[5px]">
        <Win2 />
      </div>

      <div className={`mt-[4px] pl-[2px] ${caption}`}>
        Obr. 3: Jednotkové přímé náklady na jednotku hmotnosti – doprava souhrn (dvounápravové rozmetadlo hnoje)
      </div>

      <div className="mt-[44px] text-center pr-[6px] font-['Liberation_Serif',serif] text-[21px] leading-[24px] text-[#333]">4</div>
    </div>
  );
}
